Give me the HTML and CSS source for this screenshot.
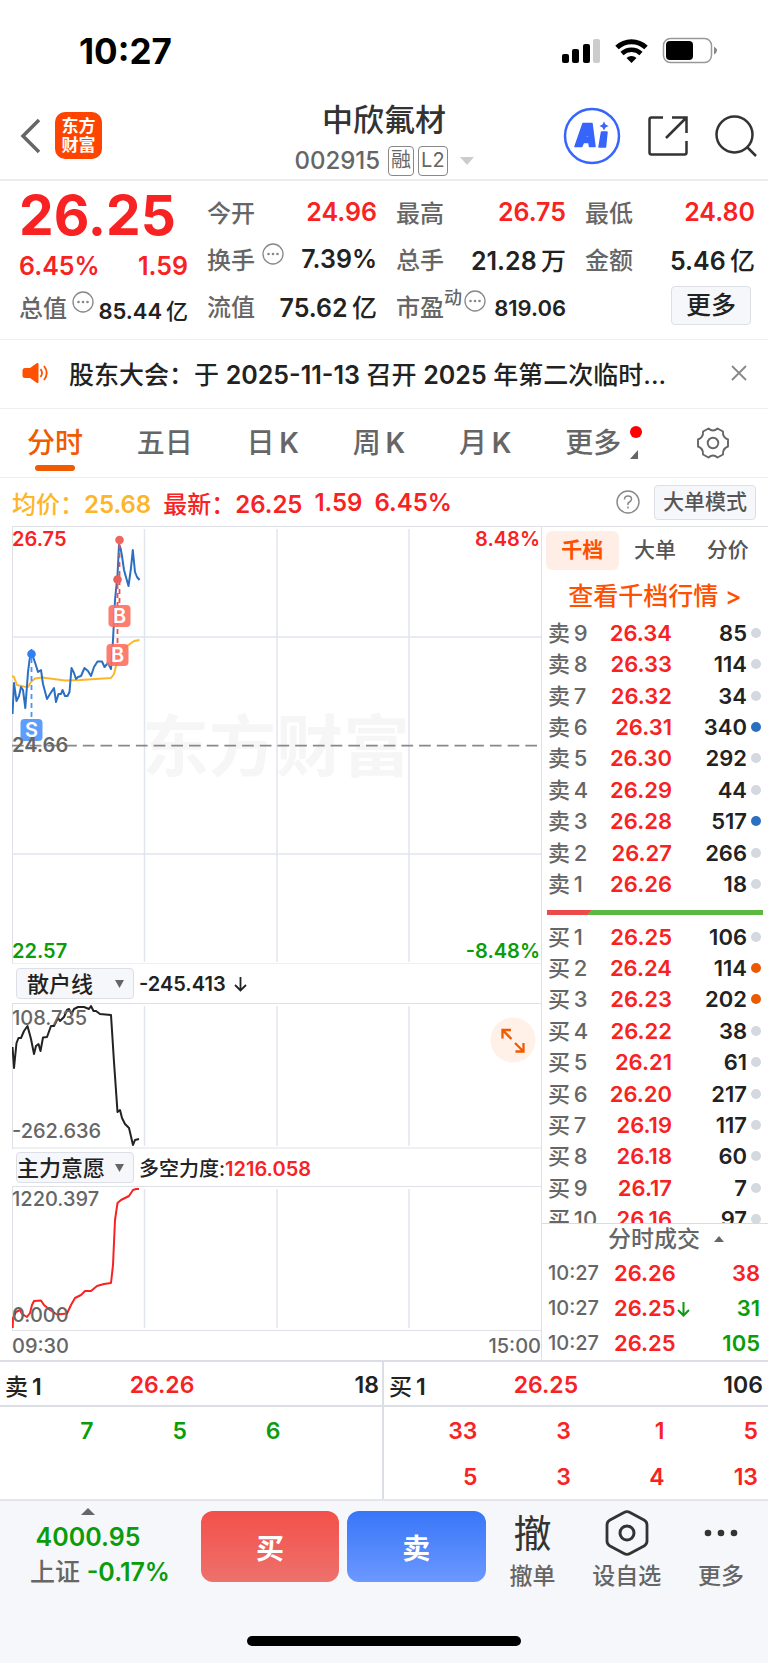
FILE: index.html
```html
<!DOCTYPE html>
<html lang="zh-CN">
<head>
<meta charset="utf-8">
<meta name="viewport" content="width=device-width, initial-scale=1">
<title>中欣氟材 002915</title>
<link rel="stylesheet" href="styles.css">
</head>
<body>
<div class="status">
  <span class="status-time">10:27</span>
  <svg class="status-icons" width="156" height="28" viewBox="0 0 156 28" aria-hidden="true">
    <rect x="1" y="17" width="7" height="9" rx="2"/><rect x="11" y="12" width="7" height="14" rx="2"/><rect x="22" y="7" width="7" height="19" rx="2"/><rect x="32" y="2" width="7" height="24" rx="2" fill="#ccc"/>
    <path d="M56 10.500a21 21 0 0 1 29 0" fill="none" stroke="#000" stroke-width="5"/>
    <path d="M61 16.500a14 14 0 0 1 19 0" fill="none" stroke="#000" stroke-width="4.500"/>
    <path d="M65.500 21a7.500 7.500 0 0 1 10 0L70.500 26z"/>
    <rect x="102.500" y="1.500" width="48" height="24" rx="7" fill="none" stroke="#999" stroke-width="1.500"/>
    <rect x="105" y="4" width="27" height="19" rx="4"/><path d="M153 9.500q6 4 0 8z" fill="#888"/>
  </svg>
</div>
<header class="header">
  <div class="header-left">
    <button class="plain" aria-label="返回"><svg width="22" height="38" viewBox="0 0 22 38"><path d="M20 3L4 19l16 16" fill="none" stroke="#666" stroke-width="3.500"/></svg></button>
    <a class="logo" href="#">东方<br>财富</a>
  </div>
  <div class="title">
    <h1>中欣氟材</h1>
    <div class="title-sub"><span>002915</span><span class="tag first">融</span><span class="tag">L2</span><svg class="title-caret" width="14" height="8" viewBox="0 0 14 8"><path d="M0 0h14L7 8z" fill="#ccc"/></svg></div>
  </div>
  <div class="header-right">
    <button class="plain" aria-label="AI"><svg width="58" height="58" viewBox="0 0 58 58"><circle cx="29" cy="29" r="27" fill="#fff" stroke="#3665fb" stroke-width="2.500"/><path fill="#3665fb" stroke="#3665fb" stroke-width="1.500" stroke-linejoin="round" fill-rule="evenodd" d="M20 16.500h9l3 23h-5.500l-.6-4h-5.400l-1.700 4H12zM22.500 30.500h2.900l-.6-5zM38.500 25h5.500l-1.500 15h-6.500z"/><path fill="#3665fb" d="M41 14.500l1.500 3 3 1.500-3 1.500-1.500 3-1.500-3-3-1.500 3-1.500z"/></svg></button>
    <button class="plain" aria-label="分享"><svg width="40" height="40" viewBox="0 0 40 40"><path d="M15 1.500H3.500q-2 0-2 2v33q0 2 2 2h33q2 0 2-2V25M24 1.500h14.500V17M38.500 1.500L18 22" fill="none" stroke="#333" stroke-width="2.500"/></svg></button>
    <button class="plain" aria-label="搜索"><svg width="42" height="42" viewBox="0 0 42 42"><circle cx="19.500" cy="19.500" r="18" fill="none" stroke="#333" stroke-width="2.500"/><path d="M32 32l9 9" stroke="#333" stroke-width="2.500"/></svg></button>
  </div>
</header>

<section class="quote">
  <div class="quote-price">
    <strong>26.25</strong>
    <div class="pair up"><b>6.45%</b><b>1.59</b></div>
    <div class="pair"><span class="lbl">总值<svg class="dots near" viewBox="0 0 22 22"><use href="#more-dots"/></svg></span><span class="small"><b>85.44</b>&#8201;亿</span></div>
  </div>
  <div class="quote-grid">
    <div class="pair up"><span class="lbl">今开</span><b>24.96</b></div>
    <div class="pair up"><span class="lbl">最高</span><b>26.75</b></div>
    <div class="pair up"><span class="lbl">最低</span><b>24.80</b></div>
    <div class="pair"><span class="lbl">换手<svg class="dots" viewBox="0 0 22 22"><g id="more-dots"><circle cx="11" cy="11" r="10" fill="none" stroke="#888" stroke-width="1.300"/><g fill="#888"><circle cx="6.500" cy="11" r="1.300"/><circle cx="11" cy="11" r="1.300"/><circle cx="15.500" cy="11" r="1.300"/></g></g></svg></span><b>7.39%</b></div>
    <div class="pair"><span class="lbl">总手</span><span><b>21.28</b>&#8201;万</span></div>
    <div class="pair"><span class="lbl">金额</span><span><b>5.46</b>&#8201;亿</span></div>
    <div class="pair"><span class="lbl">流值</span><span><b>75.62</b>&#8201;亿</span></div>
    <div class="pair"><span class="lbl">市盈<sup>动</sup><svg class="dots tight" viewBox="0 0 22 22"><use href="#more-dots"/></svg></span><span class="small"><b>819.06</b></span></div>
    <div class="pair end"><button class="box-btn more-btn">更多</button></div>
  </div>
</section>

<section class="notice">
  <svg width="26" height="22" viewBox="0 0 26 22" aria-hidden="true"><path d="M3 6h5l7-5q1.500-.5 1.500 1v18q0 1.500-1.500 1l-7-5H3q-2.500 0-2.500-2.500v-5Q.5 6 3 6z" fill="#ff5000"/><path d="M18.500 7q3 4 0 8M22 4q5.500 7 0 14" fill="none" stroke="#ff5000" stroke-width="1.800"/></svg>
  <a href="#">股东大会：于 <b>2025-11-13</b> 召开 <b>2025</b> 年第二次临时...</a>
  <button class="plain" aria-label="关闭"><svg width="16" height="16" viewBox="0 0 16 16"><path d="M1 1l14 14M15 1L1 15" stroke="#888" stroke-width="1.800"/></svg></button>
</section>

<nav class="tabs">
  <a class="active" href="#">分时</a><a href="#">五日</a><a href="#">日&#8201;<b>K</b></a><a href="#">周&#8201;<b>K</b></a><a href="#">月&#8201;<b>K</b></a>
  <a class="more" href="#">更多<svg width="14" height="36" viewBox="0 0 14 36"><circle cx="7" cy="7" r="6" fill="#f00"/><path d="M9 25v9H1z" fill="#666"/></svg></a>
  <button class="plain" aria-label="设置"><svg width="32" height="32" viewBox="0 0 32 32"><path d="M11.500 1.500q4.500 4 9 0l5.500 3q-.5 6 5 8v7q-5.500 2-5 8l-5.500 3q-4.500-4-9 0l-5.500-3q.5-6-5-8v-7q5.500-2 5-8z" fill="none" stroke="#666" stroke-width="1.900" stroke-linejoin="round"/><circle cx="16" cy="16" r="5.300" fill="none" stroke="#666" stroke-width="1.900"/></svg></button>
</nav>

<section class="info">
  <span class="avg">均价：<b>25.68</b></span>
  <span class="last">最新：<b>26.25</b></span><span class="last"><b>1.59</b></span><span class="last"><b>6.45%</b></span>
  <button class="plain help" aria-label="帮助"><svg width="24" height="24" viewBox="0 0 24 24"><circle cx="12" cy="12" r="11" fill="none" stroke="#888" stroke-width="1.400"/><path d="M8.500 9.500q0-3.500 3.500-3.500t3.500 3q0 2-2 3t-1.500 3M12 16.500v2" fill="none" stroke="#888" stroke-width="1.500"/></svg></button>
  <button class="box-btn mode-btn">大单模式</button>
</section>

<main class="board">
  <div class="charts">
    <svg class="chart" viewBox="12 526 530 438" role="img" aria-label="分时走势">
      <text class="mark" x="142" y="771">东方财富</text>
      <path class="grid" d="M144.500 529V962M277 529V962M409 529V962M12 637H541M12 854H541"/>
      <path class="frame" d="M12 526.500H542M12.500 526V964M541.500 526V964M12 964H542"/>
      <path d="M12 745.700H541" stroke="#888" stroke-width="1.800" stroke-dasharray="11.700 6"/>
      <path class="line" stroke="#fdb52a" d="M12 676L14 677 17 685 24 686.500 28 687 31 682 35 678.500 42 677.500 50 678.500 65 680.500 80 680 111 678 114 674 117 662 121 652 127 646 134 641 139.500 640"/>
      <path class="line" stroke="#2b6fc2" d="M12.500 714L14 683 16.500 701 19 696 21 687 23 690 25.300 708 28 672 29.500 660 31.500 650 33.500 658 35.500 664 38 672 41 670 43 684 47 699 50 694 54 688 56 702 58.500 694 61 694 62.500 690 65 696 67.500 696 69.500 692 71.500 668 74 673 76 679 78 677 81 676 84.500 668 88 671 91 676 94 667 97.500 661.500 102 661.500 104.500 667 108 663 111 669 113 640 115 600 117.500 575 119 545 120.500 548 122 556 124 570 128.500 586 131 568 132.800 550 135 572 137 577 139.500 580"/>
      <path d="M31.500 658V719" stroke="#4b92fb" stroke-width="1.800" stroke-dasharray="5 4"/>
      <path d="M119.500 544V605M117.500 584V644" stroke="#e8504c" stroke-width="1.800" stroke-dasharray="5 4"/>
      <circle cx="31.500" cy="654" r="4.300" fill="#2f80f5"/><circle cx="119.500" cy="540" r="4.300" fill="#f0655c"/><circle cx="117.500" cy="579.500" r="4.300" fill="#e8605c"/>
      <g class="pin"><rect x="20.500" y="719" width="22" height="22" rx="4" fill="#4b92fb" opacity=".9"/><text x="31.500" y="737">S</text>
      <rect x="108.500" y="605" width="22" height="22" rx="4" fill="#fd6f60" opacity=".9"/><text x="119.500" y="623">B</text>
      <rect x="106.500" y="644" width="22" height="22" rx="4" fill="#fd6f60" opacity=".9"/><text x="117.500" y="662">B</text></g>
      <text class="red" x="12" y="546">26.75</text><text class="red right" x="540" y="546">8.48%</text>
      <text x="12" y="752">24.66</text>
      <text class="green" x="12" y="958">22.57</text><text class="green right" x="540" y="958">-8.48%</text>
    </svg>
    <div class="tool">
      <span class="pick"><select class="inset" aria-label="副图一"><option>散户线</option></select><svg width="9" height="8" viewBox="0 0 9 8"><path d="M0 0h9L4.500 8z" fill="#666"/></svg></span>
      <b>-245.413</b><svg class="drop" width="13" height="16" viewBox="0 0 13 16"><path d="M6.500 1v13M1 9l5.500 5.500L12 9" fill="none" stroke="#222" stroke-width="1.800"/></svg>
    </div>
    <div class="overlay-host">
      <svg class="chart thin" viewBox="12 1003 530 146" role="img" aria-label="散户线">
        <path class="grid" d="M144.500 1006V1146M277 1006V1146M409 1006V1146"/>
        <path class="frame" d="M12 1003.500H542M12.500 1003V1149M541.500 1003V1149M12 1148H542"/>
        <path class="line" stroke="#222" d="M12.500 1047L14 1068 16.500 1043 18.500 1038 21 1038 24 1031 27.500 1026 31 1039 34 1054 36 1046 38.500 1044 40.500 1051 43 1037.500 47 1037 51 1026 54 1026 58 1018 60 1021 64 1017 67 1010 69 1009 71.500 1014 74 1009 78 1007 84 1007 89 1009 91 1006 93.500 1011 96 1011 100 1014 111 1015 114 1062 117.500 1112 120 1110 122 1118 125 1124 129 1128 133 1145 135 1140 139 1139"/>
        <text x="12" y="1025">108.735</text><text x="12" y="1138">-262.636</text>
      </svg>
      <button class="plain expand" aria-label="放大"><svg width="46" height="46" viewBox="0 0 46 46"><circle cx="23" cy="23" r="22.500" fill="#fff0e8"/><path d="M12.500 21.500v-8.500h8.500M12.500 13l9 9M25 26l9 9M25.500 34.500h8V26" fill="none" stroke="#f05a00" stroke-width="2.300"/></svg></button>
    </div>
    <div class="tool low">
      <span class="pick"><select aria-label="副图二"><option>主力意愿</option></select><svg width="9" height="8" viewBox="0 0 9 8"><path d="M0 0h9L4.500 8z" fill="#666"/></svg></span>
      <span>多空力度:<b class="red">1216.058</b></span>
    </div>
    <svg class="chart thin" viewBox="12 1186 530 145" role="img" aria-label="主力意愿">
      <path class="grid" d="M144.500 1189V1328M277 1189V1328M409 1189V1328"/>
      <path class="frame" d="M12 1186.500H542M12.500 1186V1331M541.500 1186V1331M12 1330.500H542"/>
      <path class="line" stroke="#f82222" d="M12.700 1328L13 1318 16 1312 20 1310 22 1314 27 1317 30 1313 32 1305 34 1301 41 1300.500 44 1305 50 1310 57 1314.500 67 1313.500 71 1305 75 1298 81 1295 85 1291 91 1291 97 1286 104 1284 111 1283 113 1265 115 1220 117.500 1203 121 1200 129 1196 133 1190 136 1189 139 1189"/>
      <text x="12" y="1206">1220.397</text><text x="12" y="1322">0.000</text>
    </svg>
    <div class="axis"><span>09:30</span><span>15:00</span></div>
  </div>

  <aside class="side">
    <nav class="side-tabs"><a class="active" href="#">千档</a><a href="#">大单</a><a href="#">分价</a></nav>
    <a class="side-link" href="#">查看千档行情 &gt;</a>
    <table class="book">
      <tr><th>卖&#8201;9</th><td>26.34</td><td>85<i></i></td></tr>
      <tr><th>卖&#8201;8</th><td>26.33</td><td>114<i></i></td></tr>
      <tr><th>卖&#8201;7</th><td>26.32</td><td>34<i></i></td></tr>
      <tr><th>卖&#8201;6</th><td>26.31</td><td>340<i class="blue"></i></td></tr>
      <tr><th>卖&#8201;5</th><td>26.30</td><td>292<i></i></td></tr>
      <tr><th>卖&#8201;4</th><td>26.29</td><td>44<i></i></td></tr>
      <tr><th>卖&#8201;3</th><td>26.28</td><td>517<i class="blue"></i></td></tr>
      <tr><th>卖&#8201;2</th><td>26.27</td><td>266<i></i></td></tr>
      <tr><th>卖&#8201;1</th><td>26.26</td><td>18<i></i></td></tr>
    </table>
    <div class="ratio"></div>
    <div class="book-clip">
      <table class="book buys">
        <tr><th>买&#8201;1</th><td>26.25</td><td>106<i></i></td></tr>
        <tr><th>买&#8201;2</th><td>26.24</td><td>114<i class="orange"></i></td></tr>
        <tr><th>买&#8201;3</th><td>26.23</td><td>202<i class="orange"></i></td></tr>
        <tr><th>买&#8201;4</th><td>26.22</td><td>38<i></i></td></tr>
        <tr><th>买&#8201;5</th><td>26.21</td><td>61<i></i></td></tr>
        <tr><th>买&#8201;6</th><td>26.20</td><td>217<i></i></td></tr>
        <tr><th>买&#8201;7</th><td>26.19</td><td>117<i></i></td></tr>
        <tr><th>买&#8201;8</th><td>26.18</td><td>60<i></i></td></tr>
        <tr><th>买&#8201;9</th><td>26.17</td><td>7<i></i></td></tr>
        <tr><th>买&#8201;10</th><td>26.16</td><td>97<i></i></td></tr>
      </table>
    </div>
    <button class="plain deals-head">分时成交<svg width="10" height="6" viewBox="0 0 10 6"><path d="M0 6h10L5 0z" fill="#666"/></svg></button>
    <table class="deals">
      <tr><th>10:27</th><td>26.26</td><td class="red">38</td></tr>
      <tr><th>10:27</th><td>26.25<svg width="13" height="16" viewBox="0 0 13 16"><path d="M6.500 1v13M1 9l5.500 5.500L12 9" fill="none" stroke="#0a9c0a" stroke-width="2"/></svg></td><td class="green">31</td></tr>
      <tr><th>10:27</th><td>26.25</td><td class="green">105</td></tr>
    </table>
  </aside>
</main>

<section class="queues">
  <div class="queue">
    <div class="queue-head"><span>卖&#8201;<b>1</b></span><b class="price">26.26</b><b class="qty">18</b></div>
    <div class="queue-grid green"><span>7</span><span>5</span><span>6</span></div>
  </div>
  <div class="queue">
    <div class="queue-head"><span>买&#8201;<b>1</b></span><b class="price">26.25</b><b class="qty">106</b></div>
    <div class="queue-grid red"><span>33</span><span>3</span><span>1</span><span>5</span><span>5</span><span>3</span><span>4</span><span>13</span></div>
  </div>
</section>

<footer class="footer">
  <div class="actions">
    <a class="index" href="#">
      <svg width="14" height="7" viewBox="0 0 14 7"><path d="M0 7h14L7 0z" fill="#666"/></svg>
      <b>4000.95</b>
      <span>上证 <b>-0.17%</b></span>
    </a>
    <button class="trade buy">买</button>
    <button class="trade sell">卖</button>
    <button class="plain act"><span class="act-icon">撤</span>撤单</button>
    <button class="plain act"><span class="act-icon"><svg width="44" height="48" viewBox="0 0 44 48"><path d="M19 3.500q3-1.700 6 0l14 7.500q3 1.700 3 5v16q0 3.300-3 5l-14 7.500q-3 1.700-6 0L5 37q-3-1.700-3-5V16q0-3.300 3-5z" fill="none" stroke="#333" stroke-width="2.800"/><circle cx="22" cy="24" r="7" fill="none" stroke="#333" stroke-width="3"/></svg></span>设自选</button>
    <button class="plain act"><span class="act-icon"><svg width="34" height="8" viewBox="0 0 34 8" fill="#333"><circle cx="4" cy="4" r="3.300"/><circle cx="17" cy="4" r="3.300"/><circle cx="30" cy="4" r="3.300"/></svg></span>更多</button>
  </div>
  <div class="home"></div>
</footer>
</body>
</html>
```

FILE: styles.css
```css
* { box-sizing: border-box; }
body {
  margin: 0;
  background: #fff;
  color: #222;
  font-family: Inter, "Noto Sans CJK SC", sans-serif;
  font-size: 22px;
  font-weight: 500;
}
a { color: inherit; text-decoration: none; }
b { font-weight: 600; }
svg { display: block; flex: none; }
button, select { font: inherit; color: inherit; cursor: pointer; }
.plain { border: 0; padding: 0; background: none; display: block; }
.box-btn {
  border: 1px solid #dcdfe5;
  border-radius: 4px;
  background: #f6f7fa;
  padding: 0;
}
.red { color: #f82222; fill: #f82222; }
.green { color: #0a9c0a; fill: #0a9c0a; }

.status {
  display: flex;
  justify-content: space-between;
  align-items: center;
  height: 92px;
  padding: 10px 51px 0 79px;
}
.status-time { font-size: 35px; font-weight: 700; color: #000; }

.header {
  display: grid;
  grid-template-columns: 1fr auto 1fr;
  height: 89px;
  padding: 0 11px;
  border-bottom: 2px solid #ebebeb;
}
.header-left, .header-right { display: flex; align-items: center; }
.header-left { gap: 14px; padding-left: 8px; }
.header-right { justify-content: flex-end; gap: 27px; }
.logo {
  display: grid;
  place-content: center;
  width: 47px;
  height: 47px;
  border-radius: 10px;
  background: #ff4400;
  color: #fff;
  font-size: 17px;
  font-weight: 700;
  line-height: 19px;
}
.title { text-align: center; }
.title h1 { margin: 8px 0 0; font-size: 31px; font-weight: 500; line-height: 40px; color: #333; }
.title-sub {
  display: flex;
  align-items: center;
  justify-content: center;
  gap: 4px;
  color: #666;
  font-size: 24px;
  line-height: 30px;
  margin-top: 6px;
}
.title-sub .tag {
  border: 1px solid #888;
  border-radius: 4px;
  height: 30px;
  padding: 0 2px;
  font-size: 20px;
  line-height: 27px;
  font-weight: 400;
}
.title-sub .first { margin-left: 4px; }
.title-caret { margin-left: 8px; }

.quote {
  display: grid;
  grid-template-columns: 169fr 548fr;
  gap: 19px;
  height: 159px;
  padding: 7px 13px 0 19px;
  border-bottom: 1px solid #eee;
}
.quote-price strong { display: block; height: 54px; line-height: 54px; font-size: 55px; font-weight: 700; color: #f82222; }
.quote-price .pair { height: 35px; }
.quote-price .pair.up { height: 47px; }
.quote-grid { display: grid; grid-template-columns: repeat(3, 1fr); column-gap: 19px; grid-auto-rows: 47px; }
.pair { display: flex; justify-content: space-between; align-items: center; font-size: 25px; white-space: nowrap; }
.pair.up { color: #f82222; }
.pair.end { justify-content: flex-end; }
.pair .lbl { display: flex; align-items: center; color: #666; font-size: 24px; }
.pair .small { font-size: 22px; padding-top: 4px; }
.pair sup { align-self: flex-start; font-size: 18px; line-height: 20px; }
.dots { width: 22px; height: 22px; margin: 0 0 10px 7px; }
.dots.near { margin-left: 5px; }
.dots.tight { margin-left: 2px; }
.more-btn { width: 80px; height: 39px; margin: 0 4px 1px 0; line-height: 36px; }

.notice {
  display: flex;
  align-items: center;
  gap: 21px;
  height: 69px;
  padding: 0 21px 3px 22px;
  border-bottom: 1px solid #eee;
  font-size: 25px;
}
.notice a { flex: 1; min-width: 0; overflow: hidden; white-space: nowrap; }

.tabs {
  display: flex;
  justify-content: space-between;
  align-items: center;
  height: 69px;
  padding: 0 39px 0 27px;
  border-bottom: 1px solid #eee;
  color: #666;
  font-size: 28px;
}
.tabs a { position: relative; line-height: 68px; }
.tabs .active { color: #f05a00; }
.tabs .active::after {
  content: "";
  position: absolute;
  left: 8px;
  right: 8px;
  bottom: 6px;
  height: 6px;
  border-radius: 3px;
  background: #f05a00;
}
.tabs .more { display: flex; align-items: center; gap: 8px; }

.info {
  display: flex;
  align-items: center;
  gap: 12px;
  height: 48px;
  padding: 0 12px;
  font-size: 24px;
  white-space: nowrap;
}
.avg { color: #fdb52a; }
.last { color: #f82222; }
.help { margin: 0 2px 0 auto; }
.mode-btn { height: 35px; padding: 0 8px; font-size: 21px; line-height: 30px; color: #555; }

.board { display: grid; grid-template-columns: minmax(0, 530fr) minmax(0, 226fr); margin-left: 12px; }
.chart { width: 100%; height: auto; }
.chart text { font-size: 20px; font-weight: 600; fill: #666; }
.chart.thin text { font-weight: 500; }
.chart text.red { fill: #f82222; }
.chart text.green { fill: #0a9c0a; }
.chart text.right { text-anchor: end; }
.chart text.mark { font-size: 67px; font-weight: 700; fill: #f6f6f7; }
.chart .pin text { fill: #fff; text-anchor: middle; }
.grid { stroke: #e1e5ee; stroke-width: 1.5; fill: none; }
.frame { stroke: #dfe1e6; stroke-width: 1; fill: none; }
.line { fill: none; stroke-width: 2; stroke-linejoin: round; }
.tool {
  display: flex;
  align-items: center;
  gap: 5px;
  height: 39px;
  padding-left: 4px;
  border-right: 1px solid #dfe1e6;
  font-size: 20px;
}
.tool.low { height: 37px; }
.drop { margin-left: 3px; }
.pick { position: relative; width: 118px; }
.pick select {
  display: block;
  appearance: none;
  width: 100%;
  height: 31px;
  padding: 0;
  border: 1px solid #dcdfe5;
  border-radius: 4px;
  background: #f6f7fa;
  font-size: 22px;
  line-height: 28px;
}
.pick select.inset { padding-left: 10px; }
.pick svg { position: absolute; right: 10px; top: 12px; pointer-events: none; }
.overlay-host { position: relative; }
.expand { position: absolute; right: 6px; top: 14px; }
.axis {
  display: flex;
  justify-content: space-between;
  height: 29px;
  border-right: 1px solid #dfe1e6;
  line-height: 31px;
  font-size: 20px;
  color: #666;
}

.side { display: flex; flex-direction: column; border-top: 1px solid #dfe1e6; }
.side-tabs { display: flex; padding: 4px 4px 0; font-size: 21px; color: #555; }
.side-tabs a { flex: 1; height: 39px; line-height: 37px; text-align: center; border-radius: 6px; }
.side-tabs .active { background: #ffeee6; color: #ff5000; font-weight: 700; }
.side-link { height: 47px; line-height: 53px; text-align: center; font-size: 25px; color: #ff5000; }
.book, .deals { width: 100%; border-collapse: collapse; table-layout: fixed; }
.book { height: 283px; }
.book.buys { height: 314px; }
.book th, .book td, .deals th, .deals td { padding: 0; font-weight: 500; line-height: 28px; white-space: nowrap; }
.book th { width: 64px; padding-left: 6px; text-align: left; color: #666; font-size: 22px; }
.book td { text-align: right; width: 66px; color: #f82222; font-weight: 600; }
.book td:last-child { width: auto; padding-right: 7px; color: #222; }
.book i {
  display: inline-block;
  width: 10px;
  height: 10px;
  margin-left: 4px;
  border-radius: 50%;
  background: #d4d8df;
  vertical-align: 3px;
}
.book i.blue { background: #2b6fc2; }
.book i.orange { background: #eb5a00; }
.ratio {
  flex: none;
  height: 5px;
  margin: 10px 5px 6px;
  background: linear-gradient(125deg, #ec4b4b 20%, #5bb942 20%);
}
.book-clip { flex: 1 1 0; min-height: 0; overflow: hidden; border-bottom: 1px solid #d9dbe2; }
.deals-head { display: flex; justify-content: center; align-items: center; gap: 14px; height: 32px; padding: 0 0 3px 22px; color: #666; font-size: 23px; line-height: 28px; }
.deals { height: 104px; }
.deals th { width: 72px; padding-left: 6px; text-align: left; color: #666; font-size: 20px; }
.deals td { color: #f82222; font-weight: 600; }
.deals td:last-child { width: 60px; padding-right: 8px; text-align: right; }
.deals td.green { color: #0a9c0a; }
.deals svg { display: inline-block; margin-left: 1px; vertical-align: -1px; }

.queues { display: grid; grid-template-columns: 1fr 1fr; border-top: 2px solid #dcdee5; }
.queue + .queue { border-left: 2px solid #dcdee5; margin-left: -2px; }
.queue-head {
  display: grid;
  grid-template-columns: 1fr 1fr 1fr;
  align-items: center;
  height: 45px;
  padding: 2px 5px 0;
  border-bottom: 2px solid #dcdee5;
  font-size: 23px;
}
.queue-head .price { color: #f82222; }
.queue-head .qty { text-align: right; }
.queue-grid {
  display: grid;
  grid-template-columns: repeat(4, 1fr);
  grid-auto-rows: 46px;
  min-height: 92px;
  padding-right: 10px;
  text-align: right;
  line-height: 48px;
  font-size: 23px;
  font-weight: 600;
}

.footer { background: #f6f7fa; border-top: 2px solid #e3e5ea; height: 165px; display: flex; flex-direction: column; justify-content: space-between; padding-bottom: 18px; }
.actions { display: flex; padding: 7px 0 0 5px; }
.index { flex: none; width: 196px; display: flex; flex-direction: column; align-items: center; color: #0a9c0a; font-size: 25px; line-height: 35px; padding-right: 6px; }
.index > svg, .index > b { margin-right: 24px; }
.index > b { padding-top: 5px; }
.index span { color: #666; white-space: nowrap; }
.index span b { color: #0a9c0a; }
.trade { flex: 138; height: 71px; margin-top: 3px; padding: 0; border: 0; border-radius: 12px; color: #fff; font-size: 28px; font-weight: 700; }
.buy { margin-right: 8px; background: linear-gradient(#f3504a, #ee716c); }
.sell { background: linear-gradient(#3876f8, #6c98ff); }
.act { flex: 94; display: flex; flex-direction: column; align-items: center; color: #666; font-size: 23px; line-height: 36px; }
.act-icon { display: flex; align-items: center; height: 50px; color: #333; font-size: 38px; font-weight: 400; }
.home { width: 274px; height: 10px; margin: 0 auto; border-radius: 5px; background: #000; }
```
